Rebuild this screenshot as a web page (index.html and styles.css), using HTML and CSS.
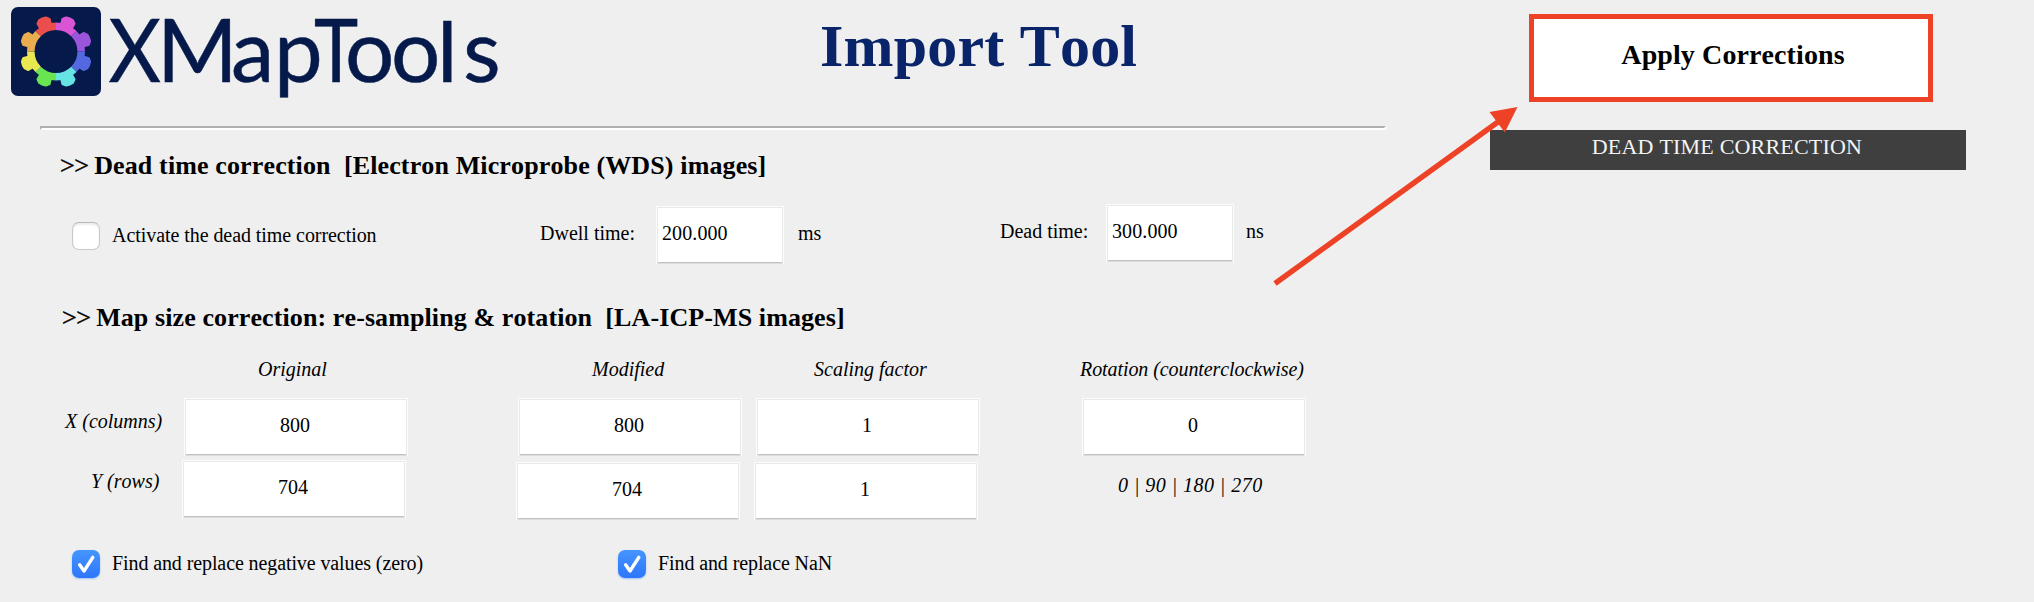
FILE: index.html
```html
<!DOCTYPE html>
<html lang="en">
<head>
<meta charset="utf-8">
<title>XMapTools - Import Tool</title>
<link rel="stylesheet" href="styles.css">
</head>
<body>
<main class="main">
  <header class="header">
    <svg class="logo" width="520" height="120" viewBox="0 0 520 120">
      <defs>
        <g id="tooth">
          <path d="M-11.1-26.8A29 29 0 0 1 11.1-26.8L8.2-19.8A21.5 21.5 0 0 0-8.2-19.8Z"/>
          <path d="M-4.8-26L-5.8-32.5L-3.2-34.8Q0-35.6 3.2-34.8L5.8-32.5L4.8-26Z" stroke-width="3.4" stroke-linejoin="round"/>
        </g>
      </defs>
      <rect x="11" y="7" width="90" height="89" rx="7" fill="#051a4a"/>
      <g transform="translate(56 51.5)">
        <use href="#tooth" transform="rotate(22.5)" fill="#da55d5" stroke="#da55d5" stroke-width="0"/>
        <use href="#tooth" transform="rotate(67.5)" fill="#9b55dc" stroke="#9b55dc" stroke-width="0"/>
        <use href="#tooth" transform="rotate(112.5)" fill="#5468e0" stroke="#5468e0" stroke-width="0"/>
        <use href="#tooth" transform="rotate(157.5)" fill="#66e3e3" stroke="#66e3e3" stroke-width="0"/>
        <use href="#tooth" transform="rotate(202.5)" fill="#6ae552" stroke="#6ae552" stroke-width="0"/>
        <use href="#tooth" transform="rotate(247.5)" fill="#e9e850" stroke="#e9e850" stroke-width="0"/>
        <use href="#tooth" transform="rotate(292.5)" fill="#e9ad50" stroke="#e9ad50" stroke-width="0"/>
        <use href="#tooth" transform="rotate(337.5)" fill="#ec4d4d" stroke="#ec4d4d" stroke-width="0"/>
      </g>
      <g class="wordmark">
        <text transform="translate(108.5 82) scale(.93 1)">X</text>
        <text y="82" x="157 231 274">Map</text>
        <text transform="translate(314 82) scale(.86 1)">T</text>
        <text y="82" x="345 391">oo</text>
        <text transform="translate(437 82) scale(1 .96)">l</text>
        <text y="82" x="463">s</text>
      </g>
    </svg>
    <h1 class="title">Import Tool</h1>
  </header>
  <div class="divider"></div>

  <section class="dead-time">
    <h2 class="heading"><span class="chevrons">&gt;&gt;</span> Dead time correction&nbsp; [Electron Microprobe (WDS) images]</h2>
    <div class="dead-row">
      <span class="check"></span>
      <span class="check-label">Activate the dead time correction</span>
      <span class="dwell-text">Dwell time:</span>
      <span class="field field-short dwell-field">200.000</span>
      <span class="dwell-text">ms</span>
      <span class="dead-text">Dead time:</span>
      <span class="field field-short dead-field">300.000</span>
      <span class="dead-text">ns</span>
    </div>
  </section>

  <section class="map-size">
    <h2 class="heading heading-map"><span class="chevrons">&gt;&gt;</span> Map size correction: re-sampling &amp; rotation&nbsp; [LA-ICP-MS images]</h2>
    <div class="column-heads">
      <span>Original</span>
      <span>Modified</span>
      <span>Scaling factor</span>
      <span class="rotation-head">Rotation (counterclockwise)</span>
    </div>
    <div class="row-x">
      <span class="row-label">X (columns)</span>
      <span class="field">800</span>
      <span class="field">800</span>
      <span class="field">1</span>
      <span class="field">0</span>
    </div>
    <div class="row-y">
      <span class="row-label">Y (rows)</span>
      <span class="field">704</span>
      <span class="field lower">704</span>
      <span class="field lower">1</span>
      <span class="angles">0 | 90 | 180 | 270</span>
    </div>
    <div class="replace-row">
      <svg class="checked" viewBox="0 0 28 28"><path d="M7.6 14.8L12 21L20.8 7.4"/></svg>
      <span class="replace-label">Find and replace negative values (zero)</span>
      <svg class="checked" viewBox="0 0 28 28"><path d="M7.6 14.8L12 21L20.8 7.4"/></svg>
      <span class="replace-label">Find and replace NaN</span>
    </div>
  </section>
</main>

<aside class="side">
  <div class="apply">Apply Corrections</div>
  <div class="status">DEAD TIME CORRECTION</div>
</aside>

<svg class="arrow" width="260" height="190" viewBox="1265 100 260 190">
  <path d="M1275 283.5L1500 120.5" stroke="#ee4226" stroke-width="5.4"/>
  <path d="M1517.5 107L1489.5 112L1504.8 132.5Z" fill="#ee4226"/>
</svg>
</body>
</html>
```
FILE: styles.css
```css
* { box-sizing: border-box; }

body {
  position: relative;
  display: flex;
  width: 2034px;
  height: 602px;
  margin: 0;
  overflow: hidden;
  background: #efefef;
  color: #000;
  font: 20px/24px "Liberation Serif", "Times New Roman", serif;
  font-kerning: none;
  white-space: nowrap;
}

.main { width: 1400px; }

.header {
  display: flex;
  align-items: flex-start;
  height: 126px;
}

.logo {
  flex: none;
  overflow: visible;
}

.wordmark {
  fill: #051a4a;
  stroke: #051a4a;
  stroke-width: 0.5px;
  font-family: Lato, sans-serif;
  font-size: 87px;
}

.title {
  margin: 13px 0 0 300px;
  color: #0a246a;
  font-size: 60px;
  font-weight: bold;
  line-height: 66px;
  letter-spacing: 0.2px;
}

.divider {
  width: 1346px;
  height: 4px;
  margin-left: 40px;
  border: 2px solid;
  border-color: #b0b0b0 #fff #fff #b0b0b0;
}

.heading {
  margin: 0 0 0 60px;
  font-size: 26px;
  font-weight: bold;
  line-height: 30px;
  letter-spacing: 0.13px;
}

.heading-map {
  margin-left: 62px;
  letter-spacing: 0.1px;
}

.chevrons {
  margin-right: -1px;
  font-weight: normal;
  letter-spacing: -0.4px;
  -webkit-text-stroke: 0.5px #000;
}

.dead-time {
  height: 150px;
  padding-top: 21px;
}

.dead-row {
  display: grid;
  grid-template-columns: 40px 428px 116px 142px 202px 106px 140px 60px;
  align-items: start;
  margin-top: -1px;
  padding-left: 72px;
}

.check {
  width: 28px;
  height: 28px;
  margin-top: 42px;
  border: 1px solid #c9c9c9;
  border-top-color: #b8b8b8;
  border-radius: 7px;
  background: #fff;
  box-shadow: inset 0 2px 2px #ececec;
}

.check-label {
  margin-top: 43px;
  letter-spacing: -0.06px;
}

.dwell-text { margin-top: 41px; }
.dwell-field { margin-top: 26px; }
.dead-text { margin-top: 39px; }
.dead-field { margin-top: 24px; }

.field {
  width: 224px;
  height: 58px;
  padding: 14px 2px 0 0;
  border: 1px solid #fcfcfc;
  border-bottom: 0;
  background: linear-gradient(#c2c2c2, #c2c2c2) 1px 55px / 220px 1px no-repeat,
    linear-gradient(#dcdcdc, #dcdcdc) 1px 56px / 220px 1px no-repeat, #fff;
  box-shadow: inset 1px 1px #e9e9e9, inset -1px 0 #e9e9e9;
  text-align: center;
}

.field-short {
  width: 128px;
  padding-left: 5px;
  background-size: 124px 1px, 124px 1px, auto;
  letter-spacing: 0.1px;
  text-align: left;
}

.map-size { padding-top: 23px; }

.column-heads {
  display: grid;
  grid-template-columns: 334px 222px 266px 240px;
  margin-top: 24px;
  padding-left: 258px;
  font-style: italic;
}

.rotation-head { letter-spacing: -0.08px; }

.row-x {
  display: grid;
  grid-template-columns: 119px 334px 238px 326px 224px;
  height: 62px;
  margin-top: 17px;
  padding-left: 65px;
}

.row-y {
  display: grid;
  grid-template-columns: 91px 334px 238px 364px 160px;
  height: 90px;
  padding-left: 91px;
}

.row-label {
  margin-top: 11px;
  font-style: italic;
}

.row-y .row-label { margin-top: 9px; }

.lower { margin-top: 2px; }

.angles {
  margin-top: 13px;
  font-style: italic;
  letter-spacing: 0.45px;
}

.replace-row {
  display: grid;
  grid-template-columns: 40px 506px 40px 240px;
  padding-left: 72px;
}

.replace-label {
  margin-top: 1px;
  letter-spacing: -0.1px;
}

.checked {
  width: 28px;
  height: 28px;
  border-radius: 7px;
  background: linear-gradient(#4595ff, #2d76fb);
  box-shadow: 0 1px 2px #9fc3f5;
  fill: none;
  stroke: #fff;
  stroke-width: 3.4;
  stroke-linecap: round;
  stroke-linejoin: round;
}

.side {
  display: flex;
  flex-direction: column;
  width: 634px;
  padding-top: 14px;
}

.apply {
  width: 404px;
  height: 88px;
  margin-left: 129px;
  padding: 19px 0 0 4px;
  border: 5px solid #ee4226;
  background: #fff;
  font-size: 28px;
  font-weight: bold;
  line-height: 34px;
  letter-spacing: 0.1px;
  text-align: center;
}

.status {
  width: 476px;
  height: 40px;
  margin: 28px 0 0 90px;
  padding: 4px 2px 0 0;
  background: #3f3f3f;
  color: #f4f4f4;
  font-size: 22px;
  line-height: 26px;
  letter-spacing: 0.2px;
  text-align: center;
}

.arrow {
  position: absolute;
  left: 1265px;
  top: 100px;
}
```
